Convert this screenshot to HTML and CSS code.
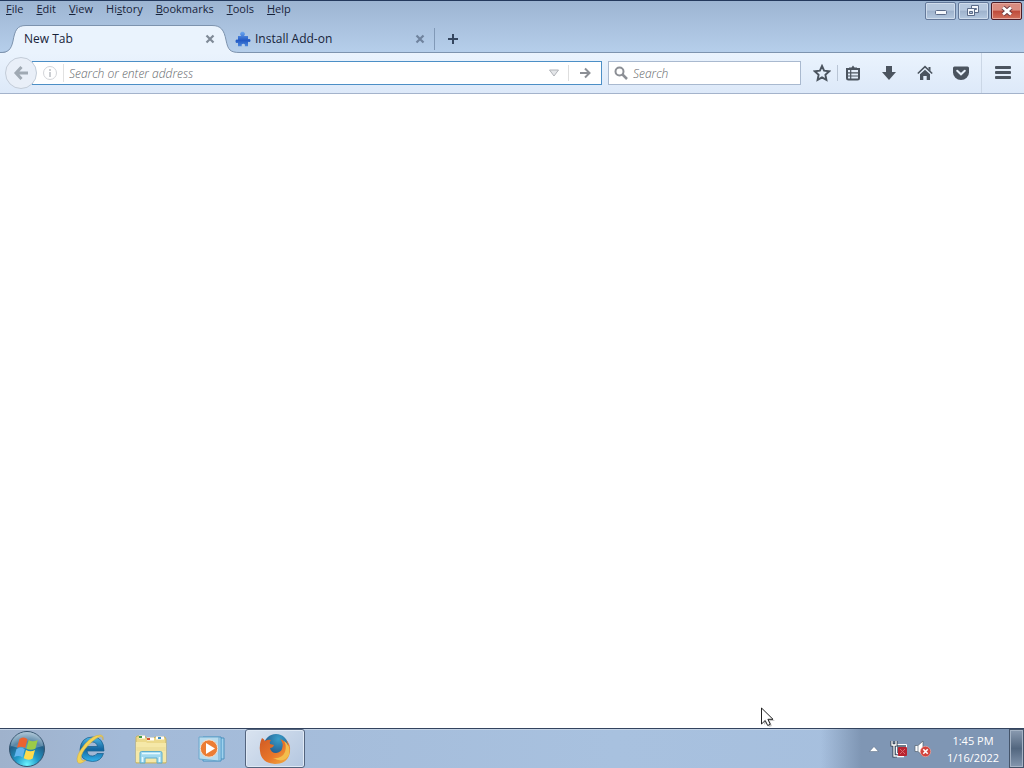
FILE: index.html
```
<!DOCTYPE html>
<html lang="en">
<head>
<meta charset="utf-8">
<title>New Tab</title>
<link rel="stylesheet" href="styles.css">
</head>
<body>
<div class="screen">
  <header class="frame">
    <div class="titlebar">
      <nav class="menubar" aria-label="Menu">
        <button><span><u>F</u>ile</span></button>
        <button><span><u>E</u>dit</span></button>
        <button><span><u>V</u>iew</span></button>
        <button><span>Hi<u>s</u>tory</span></button>
        <button><span><u>B</u>ookmarks</span></button>
        <button><span><u>T</u>ools</span></button>
        <button><span><u>H</u>elp</span></button>
      </nav>
      <div class="window-buttons">
        <button aria-label="Minimize"><svg width="30" height="16" viewBox="0 0 30 16"><rect x="9.500" y="7.500" width="11" height="4" rx="1" fill="#f4f7fb" stroke="#5b6b88"/></svg></button>
        <button aria-label="Restore"><svg width="30" height="16" viewBox="0 0 30 16"><path d="M12.500 2.500h7v7h-7z" fill="#f4f7fb" stroke="#5b6b88"/><path d="M15.500 5.500h2v1h-2z" fill="none" stroke="#5b6b88"/><path d="M8.500 5.500h7v7h-7z" fill="#f4f7fb" stroke="#5b6b88"/><path d="M10.500 8.500h3v2h-3z" fill="#a9bbd3" stroke="#5b6b88"/></svg></button>
        <button class="close-window" aria-label="Close"><svg width="30" height="16" viewBox="0 0 30 16"><path d="M11 4.500l8 7M19 4.500l-8 7" stroke="#6b3a40" stroke-width="4.600"/><path d="M11 4.500l8 7M19 4.500l-8 7" stroke="#fff" stroke-width="2.800"/></svg></button>
      </div>
    </div>
    <div class="tabstrip">
      <div class="tab active">
        <svg class="tab-shape" width="240" height="30" viewBox="0 0 240 30"><path d="M0 29C8 29 11 26 13 17C15 6 17 1.500 26 1.500H212C221 1.500 224 6 226 16C228 26 230 28.500 240 28.500V30H0Z" fill="#eaf3fd"/><path d="M0 28.500C8 28.500 11 26 13 17C15 6 17 1.500 26 1.500H212C221 1.500 224 6 226 16C228 26 230 28.500 240 28.500" fill="none" stroke="#7d93ae"/></svg>
        <span class="tab-label">New Tab</span>
        <button class="tab-close" aria-label="Close tab"><svg width="10" height="10" viewBox="0 0 10 10"><path d="M1.500 1.500l7 7M8.500 1.500l-7 7" stroke="#7f8a97" stroke-width="2.200"/></svg></button>
      </div>
      <div class="tab">
        <svg class="addon-icon" width="16" height="16" viewBox="0 0 16 16"><defs><linearGradient id="puzzle" x2="0" y2="1"><stop stop-color="#6ba6f0"/><stop offset=".6" stop-color="#2259c4"/><stop offset="1" stop-color="#4b86dc"/></linearGradient></defs><path d="M3 5H6.200C4.500 3.500 5 .8 7.500 .8S10.500 3.500 9 5H13V8.300C14 7.600 15.500 7.800 15.500 9.500S14 11.400 13 10.700V15.200H9.800C10.400 13.600 9.500 12.800 8.300 12.800S6.200 13.600 6.800 15.200H3V11.700C2 12.400 .5 12 .5 10.200S2 8.100 3 8.800Z" fill="url(#puzzle)"/></svg>
        <span class="tab-label">Install Add-on</span>
        <button class="tab-close" aria-label="Close tab"><svg width="10" height="10" viewBox="0 0 10 10"><path d="M1.500 1.500l7 7M8.500 1.500l-7 7" stroke="#6f839e" stroke-width="2.200"/></svg></button>
      </div>
      <button class="new-tab" aria-label="Open a new tab"><svg width="12" height="12" viewBox="0 0 12 12"><path d="M1 6h10M6 1v10" stroke="#34465f" stroke-width="2"/></svg></button>
    </div>
  </header>

  <div class="toolbar">
    <button class="back" aria-label="Back"><svg width="16" height="16" viewBox="0 0 16 16"><path d="M8.500 2L3 8l5.500 6M3 8h12" fill="none" stroke="#a0a9b3" stroke-width="3"/></svg></button>
    <div class="address">
      <svg width="16" height="16" viewBox="0 0 16 16"><circle cx="8" cy="8" r="6.500" fill="none" stroke="#d3d5d9"/><path d="M8 7v5M8 4v2" stroke="#cbced2" stroke-width="2"/></svg>
      <input type="text" aria-label="Address" placeholder="Search or enter address">
      <button class="history" aria-label="Show history"><svg width="10" height="8" viewBox="0 0 10 8"><path d="M.5 1h9L5 7z" fill="#e4e6e9" stroke="#b0b3b8"/></svg></button>
      <button class="go" aria-label="Go"><svg width="12" height="12" viewBox="0 0 12 12"><path d="M1 6h9M6 1.500L10.500 6 6 10.500" fill="none" stroke="#8c8f95" stroke-width="2"/></svg></button>
    </div>
    <div class="search">
      <svg width="14" height="14" viewBox="0 0 14 14"><circle cx="5.500" cy="5.500" r="4" fill="none" stroke="#8c8f95" stroke-width="2"/><path d="M8.500 8.500l4.500 4.500" stroke="#8c8f95" stroke-width="2.500"/></svg>
      <input type="text" aria-label="Search" placeholder="Search">
    </div>
    <div class="tools">
      <button class="star" aria-label="Bookmark this page"><svg width="18" height="18" viewBox="0 0 18 18"><path d="M9 2l2.100 4.700 5.100.6-3.800 3.500 1 5.100L9 13.400l-4.400 2.500 1-5.100L1.800 7.300l5.100-.6z" fill="none" stroke="#4b545f" stroke-width="1.900"/></svg></button>
      <button aria-label="Bookmarks"><svg width="16" height="16" viewBox="0 0 16 16"><path d="M2 4h12v9q0 1.500-1.500 1.500h-9Q2 14.500 2 13z" fill="none" stroke="#4b545f" stroke-width="2"/><path d="M4 2.500h2.500L8 .5l1.500 2H12V5H4z" fill="#4b545f"/><path d="M3 7.800h10M3 11h10M5.700 5v9" stroke="#4b545f" stroke-width="1.200"/></svg></button>
      <button aria-label="Downloads"><svg width="16" height="16" viewBox="0 0 16 16"><path d="M5 1h6v6h4l-7 8-7-8h4z" fill="#4b545f"/></svg></button>
      <button aria-label="Home"><svg width="16" height="16" viewBox="0 0 16 16"><path d="M.8 8.500L8 1.700l7.200 6.800" fill="none" stroke="#4b545f" stroke-width="1.600"/><path d="M11.500 2h2v4l-2-2zM3 9.300l5-4.600 5 4.600V15H9.700v-4H6.300v4H3z" fill="#4b545f"/></svg></button>
      <button aria-label="Save to Pocket"><svg width="16" height="16" viewBox="0 0 16 16"><path d="M1.500 1.500h13q1.500 0 1.500 1.500v4.500a8 7.500 0 0 1-16 0V3q0-1.500 1.500-1.500z" fill="#4b545f"/><path d="M4.200 5.700L8 9.300l3.800-3.600" fill="none" stroke="#e8f1fb" stroke-width="2" stroke-linecap="round"/></svg></button>
      <button class="menu" aria-label="Open menu"><svg width="16" height="14" viewBox="0 0 16 14"><path d="M1 1.500h14M1 6.500h14M1 11.500h14" stroke="#4b545f" stroke-width="2.800" stroke-linecap="round"/></svg></button>
    </div>
  </div>

  <main class="page"></main>

  <footer class="taskbar">
    <button class="start" aria-label="Start"><svg width="40" height="38" viewBox="0 0 40 38"><defs><radialGradient id="orb" cx=".5" cy=".95" r=".95"><stop stop-color="#6cf5ff"/><stop offset=".35" stop-color="#2199c8"/><stop offset=".7" stop-color="#225f88"/><stop offset="1" stop-color="#9dbbd0"/></radialGradient></defs><circle cx="20" cy="19" r="17.500" fill="url(#orb)" stroke="#35546f"/><path d="M4 16a16 14 0 0 1 32 0Q20 21 4 16z" fill="#fff" opacity=".25"/><path d="M12.500 9q4.500-3 8 .3l-2.300 8.700q-4-2.500-8.300-.3z" fill="#ec6330"/><path d="M21.700 10q4 2.700 9 0l-2.300 8.700q-4.500 2.300-9 0z" fill="#9ccb48"/><path d="M9.500 19q4.500-2.500 8.300.3l-2.300 8.200q-4-2.700-8.300-.3z" fill="#62b4ee"/><path d="M19 20q4.500 2.500 9 0l-2.300 8.500q-4.500 2.500-9-.3z" fill="#ffdb4c"/></svg></button>
    <button class="task" aria-label="Internet Explorer"><svg width="34" height="34" viewBox="0 0 34 34"><defs><linearGradient id="ie" x2="0" y2="1"><stop stop-color="#4fb9e8"/><stop offset=".5" stop-color="#14659f"/><stop offset="1" stop-color="#32b4ec"/></linearGradient></defs><path d="M31 19H14q.5 5 5.500 5 3 0 4.500-2.500h6.500Q28 29.500 19.500 29.500 7 29 7 17.500 8 5 19.500 5 31 5 31 19zM14 14.500h10.500Q23.500 10 19.300 10T14 14.500z" fill="url(#ie)" stroke="#155c88" stroke-width=".7" fill-rule="evenodd"/><path d="M30 8q1-5-3-5Q20 3 12 12 2 24 4.500 30q2 3.500 8.500-2-5 1.500-5-2 0-5 7-12.500Q24 4.500 28 4.500q2 0 2 3.500z" fill="#f3d358" stroke="#cfaa3a" stroke-width=".5"/></svg></button>
    <button class="task" aria-label="Windows Explorer"><svg width="34" height="34" viewBox="0 0 34 34"><path d="M2 5l1-1h8l1 2h8l1-1h10l1 2v24H2z" fill="#ecd98a" stroke="#c5b368"/><path d="M5 5h6M13 7h7M22 6h8" stroke="#fff" stroke-width="3"/><path d="M5 5h3" stroke="#3e9c48" stroke-width="2"/><path d="M13 7h3" stroke="#d95334" stroke-width="2"/><path d="M24 6h3" stroke="#3f92c8" stroke-width="2"/><path d="M2 10h10l1 1h19v19H2z" fill="#f5e8a8"/><path d="M2.500 16h29M2.500 18h29" stroke="#e2cf82" opacity=".6"/><path d="M6 31V21q0-1.500 1.500-1.500h19Q28 19.500 28 21v10h-5v-5H11v5z" fill="#9fd8ef" stroke="#5caccc"/><path d="M8.500 30v-5M25.500 30v-5M8 21.500h18" stroke="#e5f9ff" stroke-width="1.500"/></svg></button>
    <button class="task" aria-label="Windows Media Player"><svg width="34" height="34" viewBox="0 0 34 34"><path d="M12 6h17v21H12z" fill="#9fd2ee" stroke="#4c91bd"/><path d="M8 5h18v24H8z" fill="#bce3f7" stroke="#438ec0"/><path d="M4 5h20v24L4 27z" fill="#b9dcee" stroke="#6aa7cc"/><circle cx="14" cy="16.500" r="8.700" fill="#ec7d34" stroke="#eee3d8"/><path d="M11 11l9 5.500-9 5.500z" fill="#fff"/></svg></button>
    <button class="task running" aria-label="Firefox"><svg width="34" height="34" viewBox="0 0 34 34"><defs><radialGradient id="globe" cx=".6" cy=".2" r=".9"><stop stop-color="#3a9fca"/><stop offset="1" stop-color="#173b73"/></radialGradient><linearGradient id="fox" x1="0" y1="0" x2="1" y2="1"><stop stop-color="#cf5a24"/><stop offset=".55" stop-color="#e8762a"/><stop offset="1" stop-color="#f3b243"/></linearGradient></defs><circle cx="18" cy="14.500" r="12.500" fill="url(#globe)"/><path d="M4 6q2 1 3 3 3-2 6-1-2 2-1 4l4 1q-1 3-4 3 1 5 6 5 5-1 6-4 2-6-2-10 6 2 8 8 0-4-2-7 5 4 4 12-2 12-15 12Q3 31 2 19 1 12 4 6z" fill="url(#fox)"/><path d="M26 9q3 5 1 11-3 7-12 6 11 6 16-3Q33 13 26 9z" fill="#f3bd4c"/></svg></button>
    <div class="tray">
      <button class="hidden-icons" aria-label="Show hidden icons"><svg width="10" height="6" viewBox="0 0 10 6"><path d="M.5 5.500L5 .5l4.500 5z" fill="#fff" stroke="#54677e" stroke-width=".5"/></svg></button>
      <button class="tray-icon" aria-label="Network"><svg width="18" height="18" viewBox="0 0 18 18"><path d="M6.500 4.500h10v9h-10z" fill="#6f7c8a" stroke="#fff"/><path d="M5 16.500h9" stroke="#fff" stroke-width="1.500"/><path d="M2 1v4h4V1M4 5v11h3" fill="none" stroke="#303d4c" stroke-width="3"/><path d="M2 1v4h4V1M4 5v11h3" fill="none" stroke="#fff" stroke-width="1.300"/><rect x="8" y="7" width="9" height="9" rx="1" fill="#b82430"/><path d="M10 9l5 5M15 9l-5 5" stroke="#d86a6e" stroke-width="1"/></svg></button>
      <button class="tray-icon" aria-label="Volume muted"><svg width="18" height="18" viewBox="0 0 18 18"><path d="M1 5.500h3L9 1v15l-5-4.500H1z" fill="#fff" stroke="#52606e" stroke-width=".7"/><path d="M4 5.500v6" stroke="#8995a2"/><circle cx="11.500" cy="11.500" r="5.200" fill="#d2443e" stroke="#f2b1a9" stroke-width=".6"/><path d="M9.300 9.300l4.400 4.400M13.700 9.300l-4.400 4.400" stroke="#fff" stroke-width="1.600"/></svg></button>
      <button class="clock"><time>1:45 PM</time><time>1/16/2022</time></button>
      <button class="show-desktop" aria-label="Show desktop"></button>
    </div>
  </footer>
  <svg class="cursor" width="16" height="22" viewBox="0 0 16 22"><path d="M3 4v14l3-3 2 5 3-1-2-5h5z" fill="#777" opacity=".4"/><path d="M.5 1v16l3.700-3.500 2.500 5 2.600-1.200-2.400-5H12z" fill="#fff" stroke="#222"/></svg>
</div>
</body>
</html>
```
FILE: styles.css
```
* { box-sizing: border-box; }
body {
  margin: 0;
  font: 12px/16px "Open Sans", "Noto Sans", sans-serif;
  color: #17233a;
}
button {
  display: flex;
  align-items: center;
  justify-content: center;
  flex: none;
  margin: 0;
  padding: 0;
  border: 0;
  background: none;
  color: inherit;
  font: inherit;
}
svg { display: block; flex: none; }
input {
  flex: 1;
  min-width: 0;
  height: 18px;
  padding: 0;
  border: 0;
  outline: 0;
  background: none;
  font: inherit;
}
input::placeholder {
  color: #65686c;
  opacity: 1;
  font-style: italic;
  font-weight: 300;
}

.screen {
  position: relative;
  display: flex;
  flex-direction: column;
  height: 100vh;
  overflow: hidden;
}
.frame {
  border-top: 1px solid #24395c;
  background: linear-gradient(#9db5d2, #b6cfeb);
}
.titlebar {
  display: flex;
  justify-content: space-between;
  height: 23px;
}
.menubar {
  display: flex;
  align-items: flex-start;
  gap: 13px;
  padding-left: 6px;
  font-size: 11px;
}
.menubar u { text-underline-offset: 1px; }
.window-buttons {
  display: flex;
  align-items: flex-start;
  gap: 2px;
  padding: 1px 2px 0 0;
}
.window-buttons button {
  width: 31px;
  height: 18px;
  border: 1px solid #64799a;
  border-radius: 2px;
  background: linear-gradient(#b6c8de 45%, #9eb2cc 50%, #b4c8df);
  box-shadow: inset 0 0 0 1px #cfdcec;
}
.window-buttons .close-window {
  border-color: #4c1c26;
  background: linear-gradient(#d98c80 45%, #be4a3a 50%, #d2705c);
  box-shadow: inset 0 0 0 1px #e5aaa0;
}

.tabstrip {
  display: flex;
  height: 29px;
  border-bottom: 1px solid #7d93ae;
}
.tab {
  position: relative;
  display: flex;
  align-items: center;
  width: 204px;
  padding: 2px 9px 0 5px;
}
.tab.active { width: 230px; padding: 2px 15px 0 24px; }
.tab-shape { position: absolute; left: 0; top: 0; z-index: 0; }
.tab-label { position: relative; flex: 1; }
.tab-close { position: relative; }
.addon-icon { position: relative; margin-right: 4px; }
.new-tab {
  width: 37px;
  height: 22px;
  margin-top: 4px;
  border-left: 1px solid #8199b7;
}

.toolbar {
  display: flex;
  align-items: center;
  height: 41px;
  padding-left: 5px;
  border-bottom: 1px solid #a4b3cb;
  background: linear-gradient(#eaf3fd, #dde9f9);
}
.back {
  z-index: 1;
  width: 32px;
  height: 32px;
  border: 1px solid #c3ccd8;
  border-radius: 50%;
  background: #e9eff8;
}
.address, .search {
  display: flex;
  align-items: center;
  height: 24px;
  background: #fff;
}
.address {
  flex: 1;
  min-width: 0;
  margin-left: -5px;
  padding-left: 9px;
  border: 1px solid #4c8fc6;
}
.address input {
  margin-left: 5px;
  padding-left: 5px;
  border-left: 1px solid #e1e1e1;
}
.history { width: 28px; height: 16px; }
.go { width: 33px; height: 16px; border-left: 1px solid #dedede; }
.search {
  flex: 0 1 193px;
  gap: 5px;
  margin-left: 6px;
  padding-left: 5px;
  border: 1px solid #a9b9cf;
}
.tools { display: flex; align-items: center; padding-left: 5px; }
.tools button { width: 36px; height: 40px; }
.tools .star {
  width: 32px;
  height: 16px;
  margin-right: -3px;
  border-right: 1px solid #b9c5d5;
}
.tools .menu {
  width: 43px;
  margin-left: 2px;
  border-left: 1px solid #cbd7e6;
}

.page { flex: 1; background: #fff; }

.taskbar {
  display: flex;
  height: 40px;
  border-top: 1px solid #33435e;
  background: linear-gradient(90deg, #9fb2cc, #a3bad8 12%, #a8c1df 60%, #a5bedd);
  box-shadow: inset 0 1px #c3d3e6;
}
.start { width: 59px; padding-right: 5px; }
.task { width: 61px; }
.task.running {
  width: 60px;
  margin-left: 3px;
  border: 1px solid #53647e;
  border-radius: 3px;
  background: linear-gradient(135deg, #d9e3f0, #b4c7e0);
  box-shadow: inset 0 0 0 1px #dfe9f5;
}
.tray {
  display: flex;
  margin-left: auto;
  padding-left: 40px;
  background: linear-gradient(90deg, transparent, #7f96b4 40px);
  color: #fff;
}
.hidden-icons { width: 26px; }
.tray-icon { width: 24px; }
.clock {
  flex-direction: column;
  width: 74px;
  padding-left: 2px;
  font-size: 11px;
  line-height: 17px;
}
.show-desktop {
  width: 15px;
  border: 1px solid #44546a;
  background: linear-gradient(#8b9bb1, #52667f 50%, #8396ae);
  box-shadow: inset 0 0 0 1px #a5b3c5;
}
.cursor { position: absolute; left: 761px; top: 707px; }
```
